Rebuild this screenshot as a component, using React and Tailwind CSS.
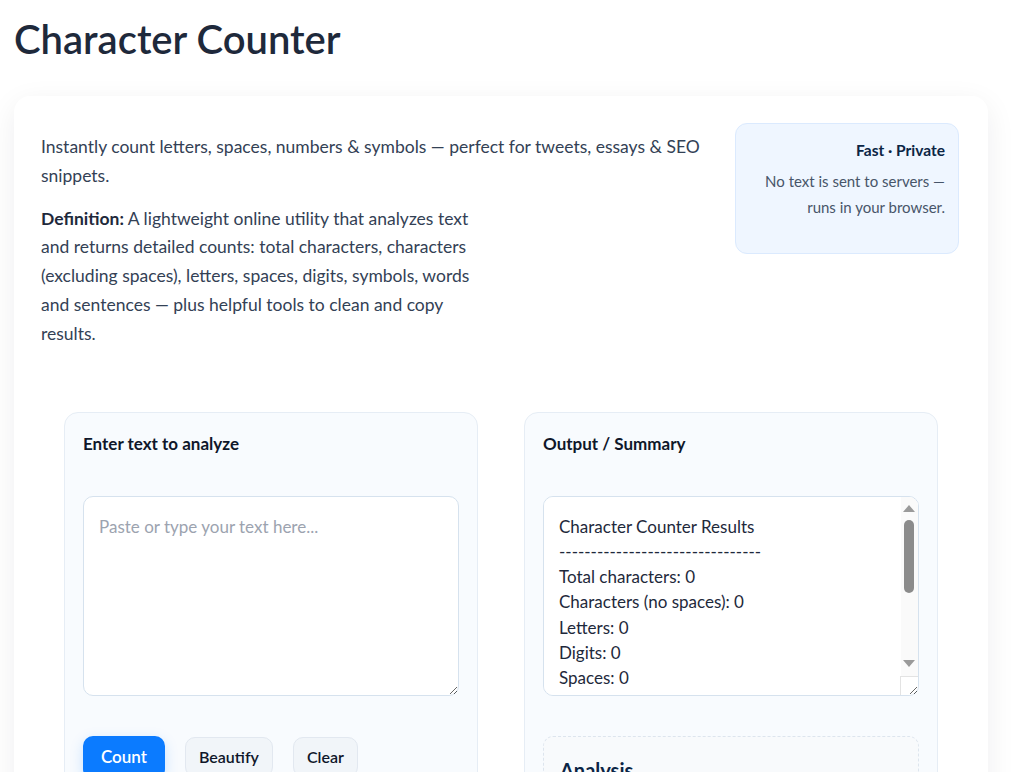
import { useState } from "react";

const FONT = "font-['Lato','Noto_Sans',sans-serif]";

const buildSummary = (text) => {
  const letters = (text.match(/[a-zA-Z]/g) || []).length;
  const digits = (text.match(/[0-9]/g) || []).length;
  const spaces = (text.match(/\s/g) || []).length;
  const words = text.trim() ? text.trim().split(/\s+/).length : 0;
  const sentences = (text.match(/[.!?]+/g) || []).length;
  return [
    "Character Counter Results",
    "-".repeat(32),
    `Total characters: ${text.length}`,
    `Characters (no spaces): ${text.length - spaces}`,
    `Letters: ${letters}`,
    `Digits: ${digits}`,
    `Spaces: ${spaces}`,
    `Symbols: ${text.length - letters - digits - spaces}`,
    `Words: ${words}`,
    `Sentences: ${sentences}`,
    `Lines: ${text ? text.split("\n").length : 0}`,
    `Paragraphs: ${text.trim() ? text.trim().split(/\n\s*\n/).length : 0}`,
    `Average word length: ${words ? (letters / words).toFixed(1) : 0}`,
  ].join("\n");
};

function Arrow({ up, className }) {
  return (
    <svg viewBox="0 0 12 7" className={`pointer-events-none absolute h-[7px] w-[12px] ${className}`}>
      <path d={up ? "M0 7 L6 0 L12 7 Z" : "M0 0 L6 7 L12 0 Z"} fill="#9a9a9a" />
    </svg>
  );
}

// scrollbar drawn over the read-only output box
function ScrollBar() {
  return (
    <>
      <div className="pointer-events-none absolute top-[1px] right-[1px] bottom-[19px] w-[17px] rounded-tr-[9px] bg-[#fafafa]" />
      <div className="pointer-events-none absolute top-[24px] right-[5px] h-[73px] w-[10px] rounded-full bg-[#8b8b8b]" />
      <Arrow up className="top-[9px] right-[4px]" />
      <Arrow className="bottom-[29px] right-[4px]" />
      <div className="pointer-events-none absolute right-[1px] bottom-[1px] h-[19px] w-[18px] rounded-br-[9px] border-t border-l border-[#e3e3e3]" />
    </>
  );
}

export default function App() {
  const [text, setText] = useState("");
  const [summary, setSummary] = useState(buildSummary(""));

  const handleBeautify = () => setText((current) => current.replace(/[ \t]+/g, " ").trim());
  const handleClear = () => {
    setText("");
    setSummary(buildSummary(""));
  };

  return (
    <div className={`h-screen overflow-hidden bg-white px-[14px] ${FONT}`}>
      <h1 className="pt-[15px] text-[40px] font-semibold leading-[1.2] text-[#1e293b]">Character Counter</h1>

      <div className="mt-[33px] w-[974px] rounded-2xl bg-white px-[27px] pt-[27px] pb-10 shadow-[0_8px_30px_rgba(15,23,42,0.07)]">
        <div className="flex gap-6">
          <div className="flex-1 pt-[10px] text-[17.5px] leading-[28.8px] text-[#334155]">
            <p className="mb-[14px]">
              Instantly count letters, spaces, numbers &amp; symbols — perfect for tweets, essays &amp; SEO snippets.
            </p>
            <p className="max-w-[445px]">
              <strong className="font-bold text-[#1e293b]">Definition:</strong> A lightweight online utility that
              analyzes text and returns detailed counts: total characters, characters (excluding spaces), letters,
              spaces, digits, symbols, words and sentences — plus helpful tools to clean and copy results.
            </p>
          </div>
          <div className="mr-[2px] w-[224px] shrink-0 self-start rounded-xl border border-[#dbeafe] bg-[#eff6ff] px-[13px] pt-[15px] pb-[33px] text-right">
            <p className="text-[15.5px] font-bold leading-[22px] text-[#0b2545]">Fast · Private</p>
            <p className="mt-[7px] text-[15px] leading-[26px] text-[#475569]">
              No text is sent to servers — runs in your browser.
            </p>
          </div>
        </div>

        <div className="mt-[63px] grid grid-cols-2 gap-[46px] px-[23px]">
          <section className="rounded-[14px] border border-[#e6edf5] bg-[#f8fbfe] p-[18px]">
            <h2 className="text-[17px] font-bold leading-[26px] text-[#0f172a]">Enter text to analyze</h2>
            <textarea
              value={text}
              onChange={(event) => setText(event.target.value)}
              placeholder="Paste or type your text here..."
              className="mt-[39px] block h-[200px] w-full rounded-[10px] border border-[#d6e2ee] bg-white px-[15px] pt-[17px] pb-[13px] text-[17px] leading-[25.3px] text-[#1e293b] outline-none placeholder:text-[#9ca3af]"
            />
            <div className="mt-[40px] flex items-center gap-5">
              <button
                onClick={() => setSummary(buildSummary(text))}
                className="h-[43px] rounded-[10px] bg-[#0b7bff] px-[18px] text-[17px] font-semibold text-white shadow-[0_4px_14px_rgba(11,123,255,0.18)]"
              >
                Count
              </button>
              <button
                onClick={handleBeautify}
                className="h-[40px] rounded-[10px] border border-[#e2e8f0] bg-[#f1f5f9] px-[13px] text-[16px] font-semibold text-[#0f172a]"
              >
                Beautify
              </button>
              <button
                onClick={handleClear}
                className="h-[40px] rounded-[10px] border border-[#e2e8f0] bg-[#f1f5f9] px-[13px] text-[16px] font-semibold text-[#0f172a]"
              >
                Clear
              </button>
            </div>
          </section>

          <section className="rounded-[14px] border border-[#e6edf5] bg-[#f8fbfe] p-[18px]">
            <h2 className="text-[17px] font-bold leading-[26px] text-[#0f172a]">Output / Summary</h2>
            <div className="relative mt-[39px]">
              <textarea
                readOnly
                value={summary}
                className="block h-[200px] w-full rounded-[10px] border border-[#d6e2ee] bg-white pt-[17px] pr-[20px] pb-[13px] pl-[15px] text-[17px] leading-[25.3px] text-[#1e293b] outline-none"
              />
              <ScrollBar />
            </div>
            <div className="mt-[40px] rounded-[10px] border border-dashed border-[#dde5ee] bg-[#f8fafc] px-4 pt-[19px] pb-4">
              <h3 className="text-[20px] font-bold leading-[28px] text-[#0b2545]">Analysis</h3>
              <p className="mt-2 text-[15px] leading-[1.6] text-[#475569]">Start typing to see a breakdown of your text.</p>
            </div>
          </section>
        </div>
      </div>
    </div>
  );
}
